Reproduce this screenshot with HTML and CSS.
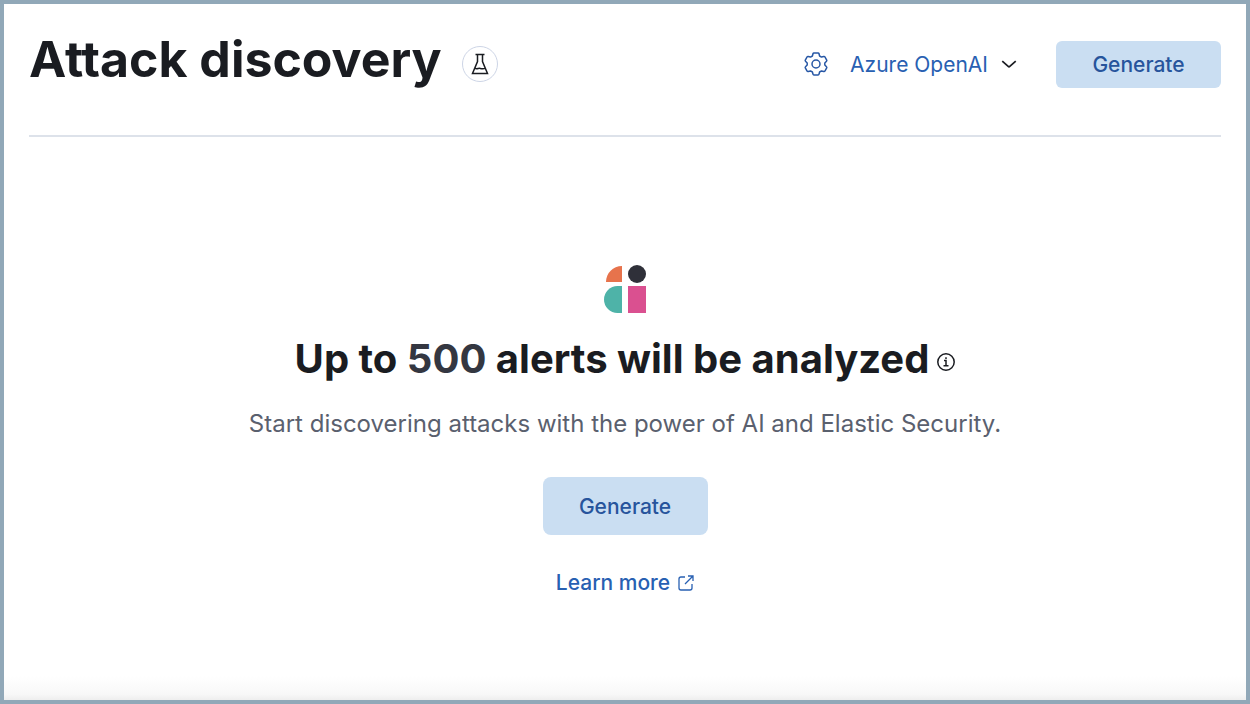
FILE: index.html
```html
<!DOCTYPE html>
<html lang="en">
<head>
<meta charset="utf-8">
<meta name="viewport" content="width=device-width, initial-scale=1">
<title>Attack discovery</title>
<link rel="stylesheet" href="styles.css">
</head>
<body class="page">
<header class="header">
  <div class="header-title">
    <h1 class="title">Attack discovery</h1>
    <span class="beta-badge" role="img" aria-label="Technical preview">
      <svg class="icon-beaker" viewBox="0 0 24 24" aria-hidden="true"><path d="M7.500 2.500h9M9.500 2.500v7L4.500 21.500h15L14.500 9.500v-7M6.800 16.200c2 1.400 3.600-.2 5.400.2 1.800.4 3 .6 5 0"/></svg>
    </span>
  </div>
  <div class="header-actions">
    <button class="icon-button" type="button" aria-label="Settings">
      <svg class="icon-gear" viewBox="0 0 24 24" aria-hidden="true"><path d="M10 1h4a1 1 0 0 1 1 .8l.6 2.200 1.900 1.100 2.300-.6a1 1 0 0 1 1.100.4l1.800 3.200a1 1 0 0 1-.2 1.200L20.800 11v2l1.700 1.700a1 1 0 0 1 .2 1.200l-1.800 3.200a1 1 0 0 1-1.100.4l-2.300-.6-1.900 1.100-.6 2.200a1 1 0 0 1-1 .8h-4a1 1 0 0 1-1-.8L8.400 20l-1.900-1.100-2.300.6a1 1 0 0 1-1.100-.4l-1.800-3.200a1 1 0 0 1 .2-1.200L3.200 13v-2L1.500 9.300a1 1 0 0 1-.2-1.200l1.800-3.200a1 1 0 0 1 1.100-.4l2.300.6L8.400 4 9 1.800a1 1 0 0 1 1-.8z"/><circle cx="12" cy="12" r="4"/></svg>
    </button>
    <button class="connector" type="button">Azure OpenAI
      <svg class="icon-chevron" viewBox="0 0 16 16" aria-hidden="true"><path d="M2 5.500l5.300 4.700a1 1 0 0 0 1.400 0L14 5.500"/></svg>
    </button>
    <button class="button" type="button">Generate</button>
  </div>
</header>
<main class="empty-prompt">
  <svg class="logo" viewBox="0 0 42 48" role="img" aria-label="AI assistant"><path fill="#e7734c" d="M18 1v16H2C2 8 9 1 18 1z"/><circle fill="#2f3039" cx="33" cy="9" r="9"/><path fill="#4eb3a8" d="M18 21v27h-4.500a13.500 13.500 0 0 1 0-27z"/><path fill="#da5090" d="M24 21h18v27H24z"/></svg>
  <h2 class="prompt-title">
    <span>Up to <span class="count">500</span> alerts will be analyzed</span>
    <svg class="icon-info" viewBox="0 0 18 18" role="img" aria-label="More information"><circle cx="9" cy="9" r="8.200"/><path d="M7 7.500h2v5M6.500 12.700h5M9 4.300v1.700"/></svg>
  </h2>
  <p class="prompt-text">Start discovering attacks with the power of AI and Elastic Security.</p>
  <button class="button button-large" type="button">Generate</button>
  <a class="learn-more" href="#learn-more">Learn more
    <svg class="icon-external" viewBox="0 0 16 16" aria-hidden="true"><path d="M7 2H3a2 2 0 0 0-2 2v9a2 2 0 0 0 2 2h9a2 2 0 0 0 2-2V9M10 1h5v5M15 1L7 9"/></svg>
  </a>
</main>
</body>
</html>
```
FILE: styles.css
```css
* {
  box-sizing: border-box;
}

.page {
  display: flex;
  flex-direction: column;
  min-height: 100vh;
  margin: 0;
  padding: 0 25px;
  border: 4px solid #91a8b8;
  background: linear-gradient(to top, #e8e8e8, #f8f8f8 10px, #ffffff 28px);
  color: #1a1c21;
  font-family: Inter, "Liberation Sans", sans-serif;
  font-size: 21px;
}

button {
  padding: 0;
  border: 0;
  background: none;
  font: inherit;
  cursor: pointer;
}

svg {
  flex: none;
  fill: none;
  stroke: currentColor;
}

.header {
  display: flex;
  align-items: center;
  justify-content: space-between;
  height: 133px;
  padding-bottom: 11px;
  border-bottom: 2px solid #dde2ea;
}

.header-title,
.header-actions {
  display: flex;
  align-items: center;
}

.header-title {
  gap: 20px;
}

.title {
  margin: 0;
  padding-bottom: 10px;
  font-size: 50px;
  line-height: 60px;
  font-weight: 700;
}

.beta-badge {
  display: flex;
  align-items: center;
  justify-content: center;
  width: 36px;
  height: 36px;
  border: 1px solid #cdd5e6;
  border-radius: 50%;
}

.icon-beaker {
  width: 24px;
  height: 24px;
  stroke-width: 1.5;
}

.icon-button {
  display: flex;
  margin-right: 22px;
  color: #2757a5;
}

.icon-gear {
  width: 24px;
  height: 24px;
  stroke-width: 1.5;
  stroke-linejoin: round;
}

.connector {
  display: flex;
  align-items: center;
  gap: 12px;
  margin-right: 38px;
  color: #2860b2;
}

.icon-chevron {
  width: 18px;
  height: 18px;
  color: #1a1c21;
  stroke-width: 1.5;
}

.button {
  width: 165px;
  height: 47px;
  border-radius: 6px;
  background: #cadef2;
  color: #27549c;
  font-weight: 500;
}

.empty-prompt {
  display: flex;
  flex: 1;
  flex-direction: column;
  align-items: center;
  padding: 128px 0 32px;
}

.logo {
  width: 42px;
  height: 48px;
  stroke: none;
}

.prompt-title {
  display: flex;
  align-items: center;
  gap: 8px;
  margin: 22px 0 0;
  font-size: 40px;
  line-height: 48px;
  font-weight: 700;
}

.count {
  color: #343741;
}

.icon-info {
  width: 18px;
  height: 18px;
  margin-top: 6px;
  stroke-width: 1.5;
}

.prompt-text {
  margin: 24px 0 36px;
  color: #5a606e;
  font-size: 24px;
  line-height: 34px;
}

.button-large {
  height: 58px;
  border-radius: 8px;
}

.learn-more {
  display: flex;
  align-items: center;
  gap: 8px;
  margin-top: 32px;
  color: #2860b2;
  line-height: 32px;
  font-weight: 500;
  text-decoration: none;
}

.icon-external {
  width: 16px;
  height: 16px;
  stroke-width: 1.3;
}
```
